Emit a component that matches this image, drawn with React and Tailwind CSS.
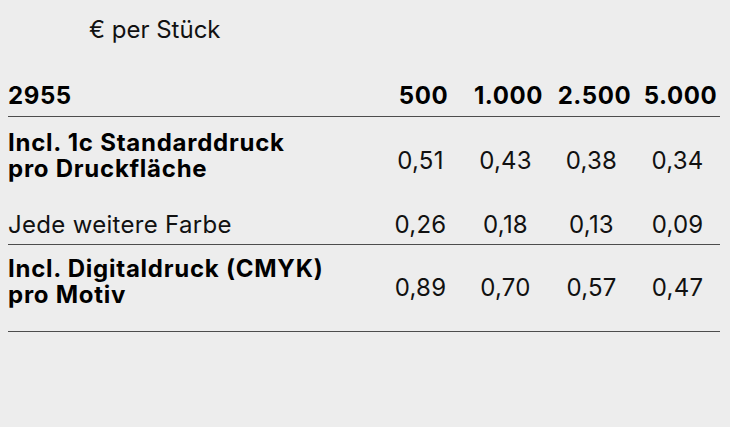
export default function App() {
  const rows = [
    { label: "Incl. 1c Standarddruck\npro Druckfläche", bold: true, values: ["0,51", "0,43", "0,38", "0,34"], h: "h-[88px]", border: false, pt: "pt-[13px]" },
    { label: "Jede weitere Farbe", bold: false, values: ["0,26", "0,18", "0,13", "0,09"], h: "h-[40px]", border: true, pt: "" },
    { label: "Incl. Digitaldruck (CMYK)\npro Motiv", bold: true, values: ["0,89", "0,70", "0,57", "0,47"], h: "h-[87px]", border: true, pt: "pt-[11px]" },
  ];
  const heads = ["500", "1.000", "2.500", "5.000"];
  return (
    <div className="w-[730px] h-[427px] bg-[#ededed] text-[#111] pl-[8px] pr-[10px]" style={{ fontFamily: "Inter, 'Noto Sans', sans-serif" }}>
      <div className="pt-[16px] pl-[81px] text-[24px] leading-[28px] font-normal">€ per Stück</div>
      <div className="mt-[38px] grid grid-cols-[370px_85px_85px_87px_85px] border-b border-[#4d4d4d] h-[35px] items-start">
        <div className="text-[24px] leading-[28px] font-bold tracking-[0.6px] text-black">2955</div>
        {heads.map((h) => (
          <div key={h} className="pl-[6px] text-[24px] leading-[28px] font-bold tracking-[0.6px] text-center text-black">{h}</div>
        ))}
      </div>
      {rows.map((r, i) => (
        <div key={i} className={`grid grid-cols-[370px_85px_85px_87px_85px] ${r.h} ${r.border ? "border-b border-[#4d4d4d]" : ""}`}>
          <div className={`whitespace-pre-line text-[24px] leading-[26px] ${r.bold ? "font-bold tracking-[0.75px] text-black self-start" : "font-normal tracking-[0.3px] self-center"} ${r.pt}`}>
            {r.label}
          </div>
          {r.values.map((v, j) => (
            <div key={j} className="self-center text-[24px] leading-[26px] font-normal tracking-[0.2px] text-center">{v}</div>
          ))}
        </div>
      ))}
    </div>
  );
}
